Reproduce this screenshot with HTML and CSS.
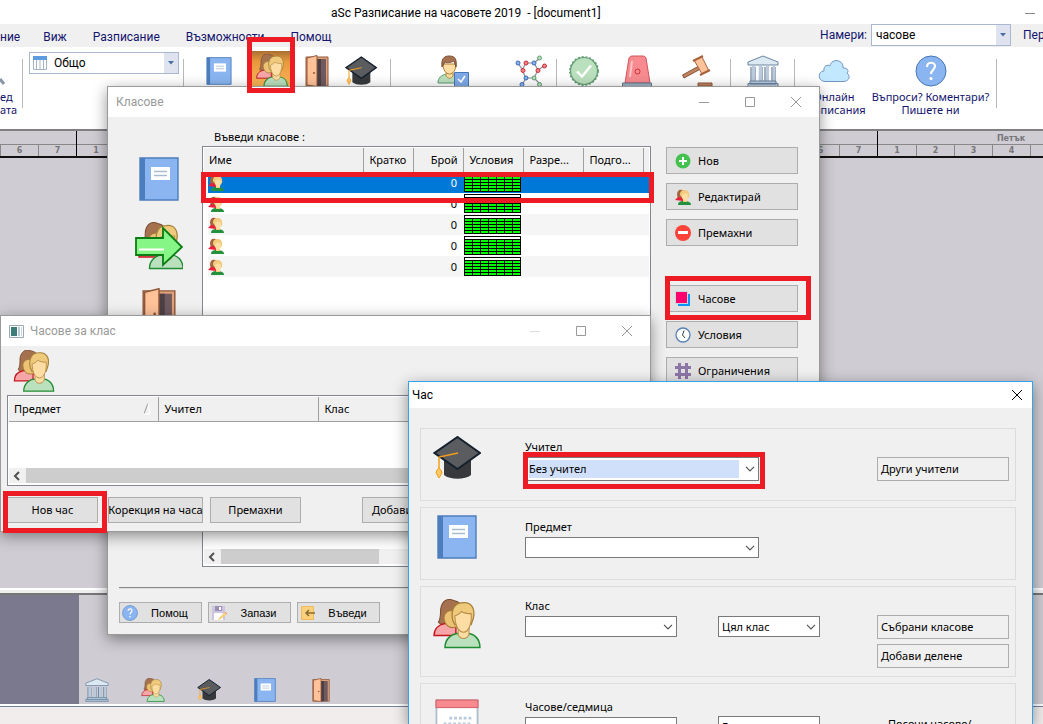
FILE: index.html
```
<!DOCTYPE html>
<html lang="bg">
<head>
<meta charset="utf-8">
<title>aSc Разписание на часовете 2019</title>
<link rel="stylesheet" href="styles.css">
</head>
<body>
<svg class="defs" aria-hidden="true">
  <symbol id="people" viewBox="0 3 44 45">
    <path d="M5 24c2-3 2-7 2-12C8 5 13 1 19 4c6 1 8 5 8 11v11H9c-2 0-3-1-4-2z" fill="#a5714f" stroke="#7c5034"/>
    <path d="M1 36c0-6 4-10 10-11h10v11z" fill="#f6a5a8" stroke="#c4161c" stroke-width="1.3"/>
    <path d="M10 20c0-4 3-7 7-7l6 3v11c-6 4-12 1-13-7z" fill="#ecc275" stroke="#a57b35"/>
    <path d="M11 47c0-8 6-13 14-13h5c8 0 13 5 13 13z" fill="#bbe0be" stroke="#1f8b32" stroke-width="1.4"/>
    <path d="M23 29h10v6c-2 5-8 5-10 0z" fill="#fddda3" stroke="#b98e46"/>
    <path d="M18 22C16 12 20 6 27 6c8-1 12 5 10 14l-2 6H20z" fill="#efca7d" stroke="#a5823c" stroke-width="1.2"/>
    <path d="M20 18c2-1 4-1 6-4 3 2 6 2 9 2 1 8-2 17-7 17-5 0-8-7-8-15z" fill="#fddda3" stroke="#b98e46"/>
  </symbol>
  <symbol id="people-small" viewBox="0 0 16 16">
    <path d="M2 6c0-4 2-6 5-5 2 0 3 2 3 4l-2 5H3z" fill="#a5643c"/>
    <path d="M0 11l3-3 6 1-1 3z" fill="#e8213a"/>
    <path d="M3 16c0-3 2-4 6-4s7 1 7 4z" fill="#23913d"/>
    <path d="M5 6c0-4 2-5 5-5s5 3 4 7l-2 2v3H8v-3z" fill="#f2cb7f"/>
    <path d="M7 6l3-2 3 2c0 4-1 6-3 6S7 9 7 6z" fill="#fddda3"/>
  </symbol>
  <symbol id="book" viewBox="0 0 40 44">
    <path d="M1 1h38v42H1z" fill="#8ab5f0" stroke="#4c7ebd" stroke-width="1.4"/>
    <path d="M1 1h5v42H1z" fill="#4c7ebd"/>
    <path d="M12 10h19v13H12z" fill="#fff"/>
    <path d="M15 14.500h13M15 18.500h13" stroke="#a9bccf" stroke-width="1.3"/>
  </symbol>
  <symbol id="door" viewBox="0 0 24 32">
    <path d="M1 2h22v29H1z" fill="#e0a078" stroke="#90583b"/>
    <path d="M12 4h9v27h-9z" fill="#6f5a60"/><path d="M12 4h4v27h-4z" fill="#4c4044"/>
    <path d="M2 3l10-2.500v31L2 30z" fill="#ffc299" stroke="#90583b"/>
    <circle cx="9" cy="18" r="1" fill="#90583b"/>
  </symbol>
  <symbol id="cap" viewBox="0 0 48 44">
    <path d="M11 22v17c6 5 21 5 27 0V22z" fill="#37393c"/>
    <path d="M24.500 1L47 17 24.500 33 1.500 17z" fill="#5a5c5f" stroke="#16212e" stroke-width="2"/>
    <path d="M25 17L6 21v12" fill="none" stroke="#f49d1a" stroke-width="1.500"/>
    <path d="M4 34l2-2 2 2 1 3-3 5-3-5z" fill="#ffc867" stroke="#f49d1a"/>
  </symbol>
  <symbol id="bank" viewBox="0 0 32 32">
    <path d="M1 10v-3L16 1l15 6v3z" fill="#dce9f2" stroke="#6a84a0"/>
    <path d="M4 12v14M8 12v14M12.500 12v14M15 12v14M18 12v14M21 12v14M25 12v14M28 12v14" stroke="#7189a5" stroke-width="1.300"/>
    <path d="M5 11h3v15H5zM12 11h3v15h-3zM19 11h3v15h-3zM26 11h2v15h-2z" fill="#b9cbdc"/>
    <path d="M3 26h26v3H3zM1 28.500h30v3H1z" fill="#b9cbdc" stroke="#6a84a0"/>
  </symbol>
  <symbol id="person-check" viewBox="0 0 32 32">
    <path d="M1 28c0-5 3-8 9-9h6c6 1 8 4 8 9z" fill="#bbe0be" stroke="#5e9b70"/>
    <path d="M9 17h7v4c-2 3-5 3-7 0z" fill="#fddda3" stroke="#b98e46"/>
    <path d="M6 9c0 6 3 10 6.500 10S19 15 19 9z" fill="#fddda3" stroke="#b07d35"/>
    <path d="M5 12C4 4 7 1 12 1c6 0 8 3 7 11l-2-6C13 8 9 8 8 7z" fill="#a5714f" stroke="#7c5034"/>
    <path d="M17.500 17.500h14v14h-14z" fill="#7eaae8" stroke="#4676b5"/>
    <path d="M21 24l3 3 4-6" fill="none" stroke="#fff" stroke-width="1.600"/>
  </symbol>
  <symbol id="network" viewBox="0 0 32 32">
    <path d="M3 8l5 8m3-8h8l4 7-4 8h-8l-4-8 4-7m8 0l6-5m-2 12l6-4m-10 12l6 6M11 23l-4 7" fill="none" stroke="#8a8c9c" stroke-width="1.200"/>
    <g fill="#8ab5f0" stroke="#3b6cb0"><circle cx="3" cy="8" r="2"/><circle cx="19" cy="8" r="2"/><circle cx="11" cy="23" r="2"/><circle cx="7" cy="29.500" r="2"/></g>
    <g fill="#f58288" stroke="#c72f38"><circle cx="11" cy="8" r="2"/><circle cx="8" cy="15.500" r="2"/><circle cx="23" cy="15.500" r="2"/><circle cx="29.500" cy="11" r="2"/></g>
    <g fill="#bbe0be" stroke="#5e9b70"><circle cx="24.500" cy="3" r="2"/><circle cx="19" cy="23" r="2"/><circle cx="24.500" cy="29.500" r="2"/></g>
  </symbol>
  <symbol id="badge" viewBox="0 0 32 32">
    <circle cx="16" cy="16" r="13.500" fill="#bbe0be" stroke="#5e9b70" stroke-width="1.200"/>
    <circle cx="16" cy="16" r="14.300" fill="none" stroke="#5e9b70" stroke-width="1.200" stroke-dasharray="2 1.800"/>
    <path d="M9 16.500l5 5 9-11" fill="none" stroke="#fff" stroke-width="2.400"/>
  </symbol>
  <symbol id="siren" viewBox="0 0 32 32">
    <path d="M4 28L8 3q1-2 3-2h11q2 0 3 2l4 25z" fill="#f78b8f" stroke="#d2555c"/>
    <path d="M9 22l2-16" stroke="#fbc3c5" stroke-width="2"/>
    <circle cx="16.500" cy="16.500" r="2.500" fill="none" stroke="#c72f38"/>
    <path d="M1.500 28h29v3.500h-29z" fill="#9db0c2" stroke="#64798e"/>
  </symbol>
  <symbol id="gavel" viewBox="0 0 32 32">
    <path d="M1.500 20L18 11l1.500 3L3 23z" fill="#c08461" stroke="#8a5539"/>
    <path d="M13 5l8-3 7 14-7 3z" fill="#ffc299" stroke="#a5633e"/>
    <path d="M12 6l10-5M19 20l10-5" stroke="#a5633e" stroke-width="2"/>
    <path d="M17 28h14v3H17z" fill="#c08461" stroke="#8a5539"/>
  </symbol>
  <symbol id="cloud" viewBox="0 0 32 24">
    <path d="M7 22.500C-1 22 0 12 6 12c-1-5 4-7 6-5 1-8 14-7 13 2 5 0 6 3 4 5 4 3 2 8-3 8.500z" fill="#c2e8ff" stroke="#7496c4"/>
  </symbol>
  <symbol id="help" viewBox="0 0 32 32">
    <circle cx="16" cy="16" r="15" fill="#8ab5f0" stroke="#4676b5"/>
    <path d="M12 12c0-6 8-5 8-1 0 4-4 4-4 8" fill="none" stroke="#fff" stroke-width="2.200"/><circle cx="16" cy="23.500" r="1.600" fill="#fff"/>
  </symbol>
  <symbol id="add" viewBox="0 0 16 16"><circle cx="8" cy="8" r="7.500" fill="#45c14f"/><path d="M8 4v8M4 8h8" stroke="#fff" stroke-width="2"/></symbol>
  <symbol id="remove" viewBox="0 0 16 16"><circle cx="8" cy="8" r="8" fill="#fd4339"/><path d="M3 7.500h10" stroke="#fff" stroke-width="3"/></symbol>
  <symbol id="lessons" viewBox="0 0 16 16"><path d="M3 3h12v12H3z" fill="#0a94ff"/><path d="M0 0h13v13H0z" fill="#ccd6de"/><path d="M1 1h11v11H1z" fill="#ff006e"/></symbol>
  <symbol id="clock" viewBox="0 0 16 16"><circle cx="8" cy="8" r="7" fill="#fff" stroke="#5580b5" stroke-width="1.300"/><path d="M9 3.500L7.500 8l2.500 3" fill="none" stroke="#345"/></symbol>
  <symbol id="hash" viewBox="0 0 16 16"><path d="M4.500 0v16M11.500 0v16M0 4.500h16M0 11.500h16" stroke="#8c76a6" stroke-width="3"/></symbol>
  <symbol id="save" viewBox="0 0 16 16"><path d="M1 1h13v14H1z" fill="#cdc4df"/><path d="M4 1h7v5H4z" fill="#9c8fb4"/><path d="M8 2h2v3H8zM3 8h9v7H3z" fill="#fff"/><path d="M8 13l6-6 2 2-6 5-3 1z" fill="#f6cf78"/><path d="M14 7l2 2" stroke="#e88"/></symbol>
  <symbol id="enter" viewBox="0 0 16 16"><path d="M1.500 1.500h12v13h-12z" fill="#fbd07c" stroke="#edbb5b"/><path d="M15 8H6m3-3L6 8l3 3" fill="none" stroke="#8a6c32" stroke-width="1.500"/></symbol>
  <symbol id="calendar" viewBox="0 0 46 46">
    <path d="M1.500 1.500h43v45h-43z" fill="#fff" stroke="#b3bfcb" stroke-width="2"/>
    <path d="M1 1h44v8H1z" fill="#f78b8f" stroke="#cf585e"/>
    <path d="M15 20h23M9 26h29M9 32h29M9 38h29" stroke="#b7cadb" stroke-width="3" stroke-dasharray="3 2"/>
  </symbol>
  <symbol id="times" viewBox="0 0 57 19">
    <path d="M0 0h57v19H0z" fill="#000"/><path d="M1 1h55v2H1z" fill="#fff"/>
    <path d="M0 5h57M0 8h57M0 11h57M0 14h57M0 17h57" stroke="#0f0" stroke-width="2"/>
    <path d="M.5 0v19M8.500 3v16M16.500 3v16M24.500 3v16M32.500 3v16M40.500 3v16M48.500 3v16M56.500 0v19" stroke="#000"/>
  </symbol>
  <symbol id="w-min" viewBox="0 0 12 12"><path d="M1 6.500h10" stroke="currentColor"/></symbol>
  <symbol id="w-max" viewBox="0 0 12 12"><path d="M1.500 1.500h9v9h-9z" fill="none" stroke="currentColor"/></symbol>
  <symbol id="w-close" viewBox="0 0 12 12"><path d="M1 1l10 10M11 1L1 11" stroke="currentColor"/></symbol>
  <symbol id="chev" viewBox="0 0 10 6"><path d="M1 .8l4 4 4-4" fill="none" stroke="#555" stroke-width="1.200"/></symbol>
  <symbol id="tri" viewBox="0 0 6 4"><path d="M0 0h6L3 3.500z" fill="#4a6ea8"/></symbol>
  <symbol id="left" viewBox="0 0 8 10"><path d="M6 1L2 5l4 4" fill="none" stroke="#505050" stroke-width="2"/></symbol>
</svg>

<main class="app">
  <header class="app-title">aSc Разписание на часовете 2019&nbsp; - [document1]<svg class="app-min"><use href="#w-min"/></svg></header>
  <nav class="menu">
    <a href="#" class="m-cut">ние</a><a href="#">Виж</a><a href="#">Разписание</a><a href="#">Възможности</a><a href="#">Помощ</a>
    <div class="search"><label for="find">Намери:</label><span class="combo find"><input id="find" type="text" value="часове"><button class="combo-btn" aria-label="Отвори"><svg><use href="#tri"/></svg></button></span><a href="#">Пер</a></div>
  </nav>
  <div class="toolbar">
    <button class="tool t-cut"><svg viewBox="0 0 8 32"><path d="M0 24l4 5" stroke="#8898a8" stroke-width="3"/></svg><span>ед<br>ата</span></button>
    <i class="sep"></i>
    <span class="combo view"><svg class="grid-ico" viewBox="0 0 14 14"><path d="M.5.5h13v13H.5z" fill="#fff" stroke="#a6b4c4"/><path d="M0 0h14v4H0z" fill="#5c9be0"/><path d="M3.500 4v10M7 4v10M10.500 4v10" stroke="#a6b4c4"/></svg><input type="text" value="Общо" aria-label="Изглед"><button class="combo-btn" aria-label="Избор"><svg><use href="#tri"/></svg></button></span>
    <i class="sep"></i>
    <button class="tool t-book" aria-label="Предмети"><svg class="ic-book"><use href="#book"/></svg></button>
    <button class="tool t-class" aria-label="Класове"><svg><use href="#people"/></svg></button>
    <button class="tool t-door" aria-label="Стаи"><svg><use href="#door"/></svg></button>
    <button class="tool t-cap" aria-label="Учители"><svg><use href="#cap"/></svg></button>
    <i class="sep"></i>
    <button class="tool t-user" aria-label="Ученици"><svg><use href="#person-check"/></svg></button>
    <button class="tool t-net" aria-label="Връзки"><svg><use href="#network"/></svg></button>
    <i class="sep"></i>
    <button class="tool t-badge" aria-label="Проверка"><svg><use href="#badge"/></svg></button>
    <button class="tool t-siren" aria-label="Тест"><svg><use href="#siren"/></svg></button>
    <button class="tool t-gavel" aria-label="Генериране"><svg><use href="#gavel"/></svg></button>
    <i class="sep"></i>
    <button class="tool t-bank" aria-label="Училище"><svg><use href="#bank"/></svg></button>
    <i class="sep"></i>
    <button class="tool t-cloud"><svg><use href="#cloud"/></svg><span>Онлайн<br>разписания</span></button>
    <button class="tool t-help"><svg><use href="#help"/></svg><span>Въпроси? Коментари?<br>Пишете ни</span></button>
    <i class="sep"></i>
  </div>
  <div class="days">
    <div class="day"><b></b><span></span><span></span><span></span><span></span><span></span><span>6</span><span>7</span></div>
    <div class="day"><b></b><span>1</span><span></span><span></span><span></span><span></span><span></span><span></span></div>
    <div class="day"><b></b><span></span><span></span><span></span><span></span><span></span><span></span><span></span></div>
    <div class="day"><b></b><span></span><span></span><span></span><span></span><span></span><span>6</span><span>7</span></div>
    <div class="day"><b>Петък</b><span>1</span><span>2</span><span>3</span><span>4</span><span></span><span></span><span></span></div>
  </div>
  <div class="sheet"></div>
  <div class="splitter"></div>
  <div class="dock">
    <div class="dock-side"></div>
    <div class="dock-icons">
      <button aria-label="Училище"><svg><use href="#bank"/></svg></button>
      <button aria-label="Класове"><svg><use href="#people"/></svg></button>
      <button aria-label="Учители"><svg><use href="#cap"/></svg></button>
      <button aria-label="Предмети"><svg><use href="#book"/></svg></button>
      <button aria-label="Стаи"><svg><use href="#door"/></svg></button>
    </div>
  </div>
  <footer class="status"></footer>
</main>

<section class="win classes">
  <header class="win-bar"><h2>Класове</h2><div class="win-ctl"><button aria-label="Намали"><svg><use href="#w-min"/></svg></button><button aria-label="Увеличи"><svg><use href="#w-max"/></svg></button><button aria-label="Затвори"><svg><use href="#w-close"/></svg></button></div></header>
  <div class="cl-body">
    <div class="cl-side">
      <svg class="s-book"><use href="#book"/></svg>
      <svg class="s-people" viewBox="0 0 48 48"><use href="#people" x="3" width="46" height="48"/><path d="M1 16h27V6l19 19-19 18V33H1z" fill="#86f686" stroke="#0b7d14" stroke-width="1.800"/><path d="M4 27.500h25" stroke="#fff" stroke-width="2"/></svg>
      <svg class="s-door"><use href="#door"/></svg>
    </div>
    <div class="cl-main">
      <p>Въведи класове :</p>
      <div class="list cl-list">
        <table>
          <thead><tr><th class="c-name">Име</th><th class="c-50">Кратко</th><th class="c-50 num">Брой</th><th class="c-60">Условия</th><th class="c-60">Разре...</th><th class="c-60">Подго...</th><th></th></tr></thead>
          <tbody>
            <tr class="sel"><td><svg class="row-ico"><use href="#people-small"/></svg></td><td></td><td class="num">0</td><td><svg class="times"><use href="#times"/></svg></td><td></td><td></td><td></td></tr>
            <tr><td><svg class="row-ico"><use href="#people-small"/></svg></td><td></td><td class="num">0</td><td><svg class="times"><use href="#times"/></svg></td><td></td><td></td><td></td></tr>
            <tr><td><svg class="row-ico"><use href="#people-small"/></svg></td><td></td><td class="num">0</td><td><svg class="times"><use href="#times"/></svg></td><td></td><td></td><td></td></tr>
            <tr><td><svg class="row-ico"><use href="#people-small"/></svg></td><td></td><td class="num">0</td><td><svg class="times"><use href="#times"/></svg></td><td></td><td></td><td></td></tr>
            <tr><td><svg class="row-ico"><use href="#people-small"/></svg></td><td></td><td class="num">0</td><td><svg class="times"><use href="#times"/></svg></td><td></td><td></td><td></td></tr>
          </tbody>
        </table>
        <div class="scroll"><svg><use href="#left"/></svg><i class="thumb"></i></div>
      </div>
    </div>
    <div class="cl-actions">
      <button class="btn"><svg><use href="#add"/></svg>Нов</button>
      <button class="btn"><svg><use href="#people-small"/></svg>Редактирай</button>
      <button class="btn"><svg><use href="#remove"/></svg>Премахни</button>
      <button class="btn split"><svg><use href="#lessons"/></svg>Часове</button>
      <button class="btn"><svg><use href="#clock"/></svg>Условия</button>
      <button class="btn"><svg><use href="#hash"/></svg>Ограничения</button>
    </div>
  </div>
  <footer class="cl-foot">
    <button class="btn"><svg><use href="#help"/></svg><span>Помощ</span></button>
    <button class="btn"><svg><use href="#save"/></svg><span>Запази</span></button>
    <button class="btn"><svg><use href="#enter"/></svg><span>Въведи</span></button>
  </footer>
</section>

<section class="win lessons">
  <header class="win-bar"><svg class="win-ico" viewBox="0 0 15 13"><path d="M.5.5h14v12H.5z" fill="#fff" stroke="#9aa8b4"/><path d="M2 2h6v9H2z" fill="#3d7d78"/><path d="M9 2h2v9H9z" fill="#b9c8d2"/><path d="M12 2h1v9h-1z" fill="#cdd6dd"/></svg><h2>Часове за клас</h2><div class="win-ctl"><button class="off" aria-label="Намали"><svg><use href="#w-min"/></svg></button><button aria-label="Увеличи"><svg><use href="#w-max"/></svg></button><button aria-label="Затвори"><svg><use href="#w-close"/></svg></button></div></header>
  <div class="ls-body">
    <svg class="ls-ico"><use href="#people"/></svg>
    <div class="list ls-list">
      <table><thead><tr><th class="c-subj"><span>Предмет<svg viewBox="0 0 8 13"><path d="M1 12L5 1" stroke="#999"/><path d="M5 1l2 11H0" fill="none" stroke="#fff"/></svg></span></th><th class="c-teach">Учител</th><th>Клас</th></tr></thead></table>
      <div class="scroll"><svg><use href="#left"/></svg><i class="thumb wide"></i></div>
    </div>
    <div class="ls-btns"><button class="btn">Нов час</button><button class="btn corr">Корекция на часа</button><button class="btn">Премахни</button><button class="btn add">Добави</button></div>
  </div>
</section>

<section class="win lesson">
  <header class="win-bar"><h2>Час</h2><div class="win-ctl"><button aria-label="Затвори"><svg><use href="#w-close"/></svg></button></div></header>
  <div class="le-body">
    <div class="group">
      <svg class="g-cap"><use href="#cap"/></svg>
      <div class="field wide"><label for="teacher">Учител</label><span class="select focus"><select id="teacher"><option>Без учител</option></select><svg><use href="#chev"/></svg></span></div>
      <div class="side"><button class="btn flat">Други учители</button></div>
    </div>
    <div class="group">
      <svg class="g-book"><use href="#book"/></svg>
      <div class="field wide low"><label for="subject">Предмет</label><span class="select"><select id="subject"><option></option></select><svg><use href="#chev"/></svg></span></div>
    </div>
    <div class="group tall">
      <svg class="g-people"><use href="#people"/></svg>
      <div class="field low"><label for="class">Клас</label><span class="select"><select id="class"><option></option></select><svg><use href="#chev"/></svg></span></div>
      <div class="field part"><span class="select"><select aria-label="Част"><option>Цял клас</option></select><svg><use href="#chev"/></svg></span></div>
      <div class="side"><button class="btn flat">Събрани класове</button><button class="btn flat">Добави делене</button></div>
    </div>
    <div class="group tall">
      <svg class="g-cal"><use href="#calendar"/></svg>
      <div class="field week"><label for="week">Часове/седмица</label><span class="select"><select id="week"><option>1</option></select><svg><use href="#chev"/></svg></span></div>
      <div class="field part len"><span class="select"><select aria-label="Вид"><option>Единичен</option></select><svg><use href="#chev"/></svg></span></div>
      <div class="side more">Посочи часове/</div>
    </div>
  </div>
</section>

<i class="mark mark-tool"></i><i class="mark mark-row"></i><i class="mark mark-lessons"></i><i class="mark mark-new"></i><i class="mark mark-teacher"></i>
</body>
</html>
```
FILE: styles.css
```
* { box-sizing: border-box; }
body { margin: 0; height: 100vh; overflow: hidden; position: relative; font: 11px/14px "Noto Sans", "Open Sans", sans-serif; color: #000; }
button, input, select { font: inherit; color: inherit; margin: 0; padding: 0; border: 0; background: none; border-radius: 0; }
h2, p { margin: 0; font-weight: normal; }
a { color: inherit; text-decoration: none; }
svg { display: block; flex: none; }
.defs { position: absolute; width: 0; height: 0; }

/* main application */
.app { height: 100vh; display: flex; flex-direction: column; overflow: hidden; background: #cfcdd3; }
.app > * { flex: none; }
.app-title, .menu, .view, .win-bar { font-family: Roboto, "Noto Sans", sans-serif; font-size: 12px; }
.app-title { height: 24px; display: flex; align-items: center; justify-content: space-between; padding: 2px 7px 0 331px; background: #fff; white-space: pre; }
.app-min { width: 12px; height: 12px; color: #888; }
.menu { height: 23px; display: flex; align-items: center; gap: 26px; padding-top: 3px; background: #f0f0f0; color: #14146e; }
.m-cut { margin-right: -3px; }
.search { flex: 1; display: flex; align-items: center; justify-content: flex-end; gap: 4px; margin-top: -4px; white-space: nowrap; }
.search a { width: 20px; margin-left: 8px; }
.combo { display: flex; align-items: center; height: 22px; border: 1px solid #a9b8d0; background: #fff; color: #000; }
.combo input { flex: 1; min-width: 0; width: 0; padding-left: 4px; outline: 0; }
.combo-btn { align-self: stretch; width: 14px; display: grid; place-items: center; background: #dfe3f0; }
.combo-btn svg { width: 6px; height: 4px; }
.find { width: 140px; }
.view { width: 150px; margin: 5px 4px 0 6px; }
.view input { padding-left: 7px; }
.grid-ico { width: 14px; height: 14px; margin-left: 3px; }
.toolbar { height: 82px; display: flex; align-items: flex-start; background: #fff; color: #14146e; }
.sep { width: 1px; height: 49px; margin-top: 12px; background: #b8b8b8; flex: none; }
.tool { display: flex; flex-direction: column; align-items: center; flex: none; height: 76px; padding-top: 8px; font-size: 11px; line-height: 13px; text-align: center; white-space: nowrap; }
.tool svg { width: 32px; height: 32px; }
.tool span { margin-top: 3px; }
.t-cut { width: 22px; align-items: flex-start; text-align: left; }
.t-cut svg { width: 8px; }
.t-book { width: 70px; margin-right: -2px; }
.tool .ic-book { height: 28px; margin-top: 2px; }
.t-class { width: 39px; height: 42px; margin-top: 4px; padding-top: 3px; background: linear-gradient(#a86f33, #e8983c 25%, #ffbf60); }
.tool.t-class svg { width: 34px; height: 33px; }
.t-door { width: 52px; }
.t-cap { width: 36px; margin-right: 11px; }
.t-user { width: 124px; }
.t-net { width: 32px; margin-right: 9px; }
.t-badge { width: 54px; }
.t-siren { width: 52px; }
.t-gavel { width: 67px; }
.t-bank { width: 63px; }
.t-cloud { width: 78px; }
.t-help { width: 115px; margin-right: 8px; }
.t-cloud span, .t-help span { display: block; }
.days { display: flex; height: 29px; margin-left: -191px; border-top: 2px solid #808080; border-bottom: 2px solid #111; color: #77767a; font: bold 9px/11px "DejaVu Sans", sans-serif; }
.day { flex: none; width: 267px; display: grid; grid-template: 14px 11px / repeat(7, 1fr); border-left: 1px solid #000; text-align: center; }
.day b { grid-column: 1 / -1; border-bottom: 1px solid #888; line-height: 15px; font-size: 8px; }
.day span { border-left: 1px solid #888; font-size: 8px; line-height: 12px; }
.day b + span { border-left: 0; }
.app .sheet { flex: 1; }
.splitter { height: 7px; background: #efefef; border-top: 2px solid #fff; border-bottom: 2px solid #777; }
.dock { height: 109px; display: flex; }
.dock-side { width: 79px; background: #7a798e; }
.dock-icons { flex: 1; display: flex; align-items: flex-end; gap: 32px; padding: 0 6px 2px; }
.dock-icons svg { width: 24px; height: 24px; }
.status { height: 20px; background: #f0edec; border-top: 2px solid #fff; box-shadow: inset 0 1px #77819a; }

/* windows */
.win { position: absolute; background: #f0f0f0; border: 1px solid #9a9a9a; box-shadow: 0 4px 14px rgba(0,0,0,.42); }
.win-bar { height: 30px; display: flex; align-items: center; background: #fff; color: #999; }
.win-bar h2 { flex: 1; font-size: 12px; padding-left: 8px; }
.win-ctl { display: flex; }
.win-ctl button { width: 46px; height: 28px; display: grid; place-items: center; }
.win-ctl svg { width: 12px; height: 12px; }
.win-ctl .off { color: #ddd; }
.btn { display: flex; align-items: center; justify-content: center; background: #e1e1e1; border: 1px solid #adadad; white-space: nowrap; }
.list { display: flex; flex-direction: column; justify-content: space-between; background: #fff; border: 1px solid #828790; padding: 1px; }
.list table { width: 100%; table-layout: fixed; border-collapse: collapse; }
.list th { height: 24px; padding: 0 5px 0 6px; font-weight: normal; text-align: left; background: #f0f0f0; border-right: 1px solid #a0a0a0; border-bottom: 1px solid #a0a0a0; overflow: hidden; white-space: nowrap; }
.list th:first-child { padding-left: 5px; }
.list th:last-child { border-right: 0; }
.scroll { display: flex; align-items: center; height: 15px; margin-bottom: 1px; background: #f0f0f0; }
.scroll svg { width: 8px; height: 10px; margin: 0 5px 0 4px; }
.thumb { width: 158px; height: 15px; background: #cdcdcd; }
.thumb.wide { width: 560px; }

/* class list */
.classes { left: 107px; top: 86px; width: 713px; }
.cl-body { display: grid; grid-template-columns: 94px 1fr 132px; padding: 13px 21px 0 0; }
.cl-side { display: flex; flex-direction: column; padding: 27px 0 0 27px; }
.s-book { width: 48px; height: 44px; }
.s-people { width: 48px; height: 48px; margin: 21px 0 18px; }
.s-door { width: 48px; height: 46px; }
.cl-main { padding-right: 15px; }
.cl-main p { height: 16px; padding-left: 12px; }
.cl-list { height: 421px; }
.c-name { width: 159px; }
.c-50 { width: 50px; }
.c-60 { width: 60px; }
.list .num { text-align: right; }
.cl-list td { height: 21px; padding: 0; vertical-align: middle; }
.cl-list td.num { padding-right: 6px; }
.cl-list tbody tr:nth-child(odd) { background: linear-gradient(#f5f5f5, #f5f5f5) 4px 0 no-repeat; }
.cl-list tbody tr.sel { background: linear-gradient(#0078d7, #0078d7) 4px 0 no-repeat; color: #fff; }
.row-ico { width: 16px; height: 16px; margin-left: 4px; }
.times { width: 57px; height: 19px; margin-left: 1px; }
.cl-actions { display: flex; flex-direction: column; gap: 9px; padding-top: 17px; }
.cl-actions .btn { height: 27px; justify-content: flex-start; padding-left: 8px; gap: 7px; }
.cl-actions svg { width: 16px; height: 16px; }
.cl-actions .split { margin-top: 30px; }
.cl-foot { display: flex; gap: 6px; margin: 20px 10px 0 11px; padding: 13px 0 11px; border-top: 2px groove #ddd; }
.cl-foot .btn { width: 83px; height: 21px; padding-left: 2px; font: 11px/14px "Liberation Sans", sans-serif; }
.cl-foot .btn span { flex: 1; text-align: center; }
.cl-foot svg { width: 16px; height: 16px; }

/* lessons of a class */
.lessons { left: 0; top: 315px; width: 651px; }
.win-ico { width: 15px; height: 13px; margin-left: 8px; }
.lessons .win-bar h2 { padding-left: 6px; }
.ls-body { padding: 4px 7px 8px 6px; }
.ls-ico { width: 50px; height: 42px; margin: 0 0 3px 2px; }
.ls-list { height: 91px; }
.c-subj { width: 149px; }
.c-teach { width: 160px; }
.ls-list th span { display: flex; justify-content: space-between; }
.ls-list th svg { width: 8px; height: 13px; margin-right: 2px; }
.ls-btns { display: flex; gap: 7px; margin-top: 11px; }
.ls-btns .btn { width: 91px; height: 26px; }
.ls-btns .corr { width: 95px; margin-left: 3px; }
.ls-btns .add { margin-left: 54px; padding-left: 9px; justify-content: flex-start; }

/* single lesson */
.lesson { left: 408px; top: 381px; bottom: 0; width: 625px; overflow: hidden; border-color: #33a3ea; border-bottom: 0; }
.lesson .win-bar { height: 26px; color: #000; }
.lesson .win-bar h2 { padding-left: 3px; }
.lesson .win-ctl button { width: 30px; height: 26px; }
.le-body { display: grid; gap: 6px; padding: 20px 16px 0 11px; }
.group { height: 73px; display: flex; border: 1px solid #dcdcdc; }
.group.tall { height: 91px; }
.group > svg { width: 48px; height: 44px; margin: 7px 44px 0 12px; }
.group > .g-people { height: 50px; margin-top: 12px; }
.group > .g-cal { margin-top: 15px; }
.field { width: 152px; padding-top: 11px; }
.field.wide { width: 234px; }
.field label { display: block; height: 17px; }
.field.low { padding-top: 12px; }
.field.week { padding-top: 16px; }
.field.part { width: 102px; margin-left: 41px; padding-top: 29px; }
.field.part.len { padding-top: 32px; }
.select { position: relative; display: block; }
.select select { display: block; width: 100%; height: 21px; padding: 0 20px 0 3px; appearance: none; background: #fff; border: 1px solid #7a7a7a; }
.select svg { position: absolute; right: 4px; top: 50%; width: 10px; height: 6px; margin-top: -3px; }
.select.focus select { height: 24px; padding: 2px 19px 2px 3px; background: linear-gradient(#d0e0fb, #d0e0fb) content-box, #fff; }
.side { width: 132px; margin-left: auto; margin-right: 6px; display: grid; align-content: start; gap: 5px; padding-top: 28px; }
.btn.flat { height: 24px; justify-content: flex-start; padding-left: 3px; background: #f0f0f0; }
.side.more { padding: 33px 0 0 11px; }

/* highlight frames */
.mark { position: absolute; border: 5px solid #ed1c24; pointer-events: none; }
.mark-tool { left: 247px; top: 37px; width: 48px; height: 56px; }
.mark-row { left: 201px; top: 172px; width: 453px; height: 31px; }
.mark-lessons { left: 665px; top: 276px; width: 146px; height: 44px; }
.mark-new { left: 3px; top: 491px; width: 104px; height: 42px; }
.mark-teacher { left: 523px; top: 452px; width: 242px; height: 37px; }
```
